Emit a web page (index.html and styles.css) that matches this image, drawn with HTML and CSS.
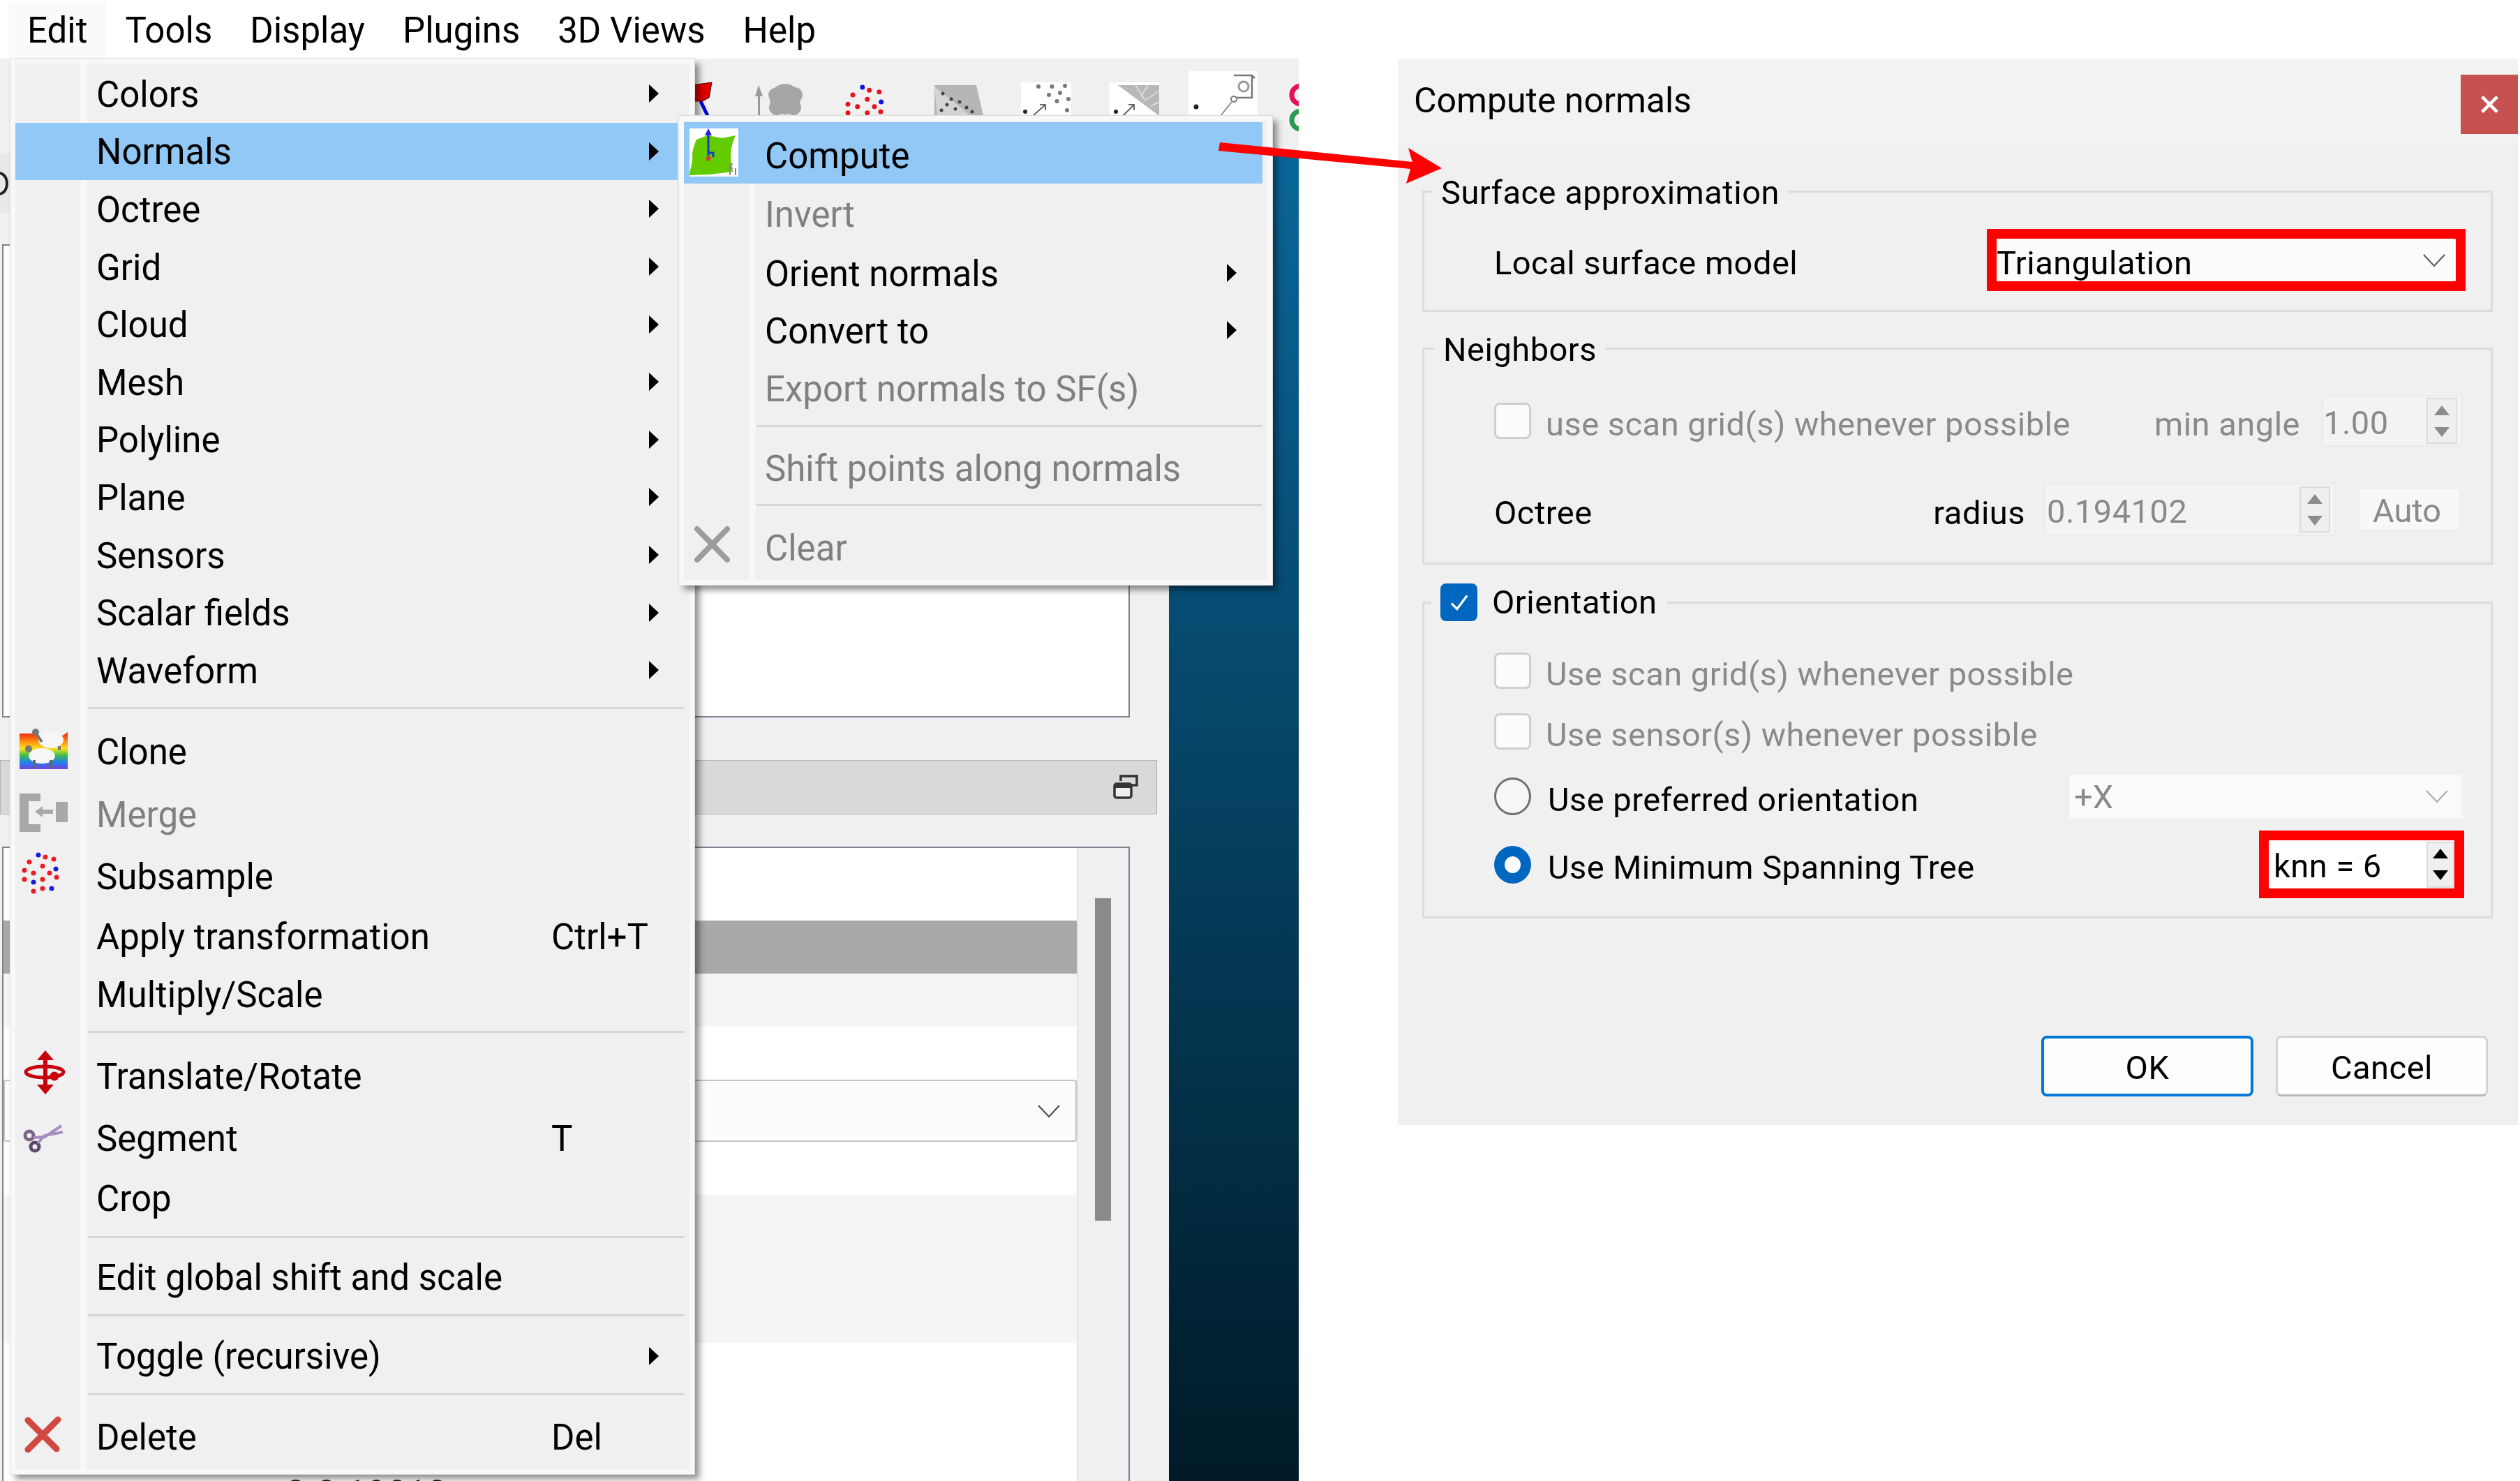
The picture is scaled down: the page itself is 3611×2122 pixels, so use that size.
FILE: index.html
```html
<!DOCTYPE html>
<html lang="en">
<head>
    <meta charset="UTF-8">
    <title>Compute normals</title>
    <link rel="stylesheet" href="styles.css">
</head>
<body>
    <div class="app">
        <div class="menubar">
            <span class="menubar-item active">Edit</span>
            <span class="menubar-item">Tools</span>
            <span class="menubar-item">Display</span>
            <span class="menubar-item">Plugins</span>
            <span class="menubar-item">3D Views</span>
            <span class="menubar-item">Help</span>
        </div>

        <div class="toolbar">
            <div class="grip"></div>
            <svg class="tool" viewBox="0 0 125 100">
                <path d="M60 45L72 70" stroke="#0000e0" stroke-width="5" fill="none"/>
                <path d="M48 22L76 18L72 40L62 45L50 45Z" fill="#e00000" stroke="#400" stroke-width="1"/>
            </svg>
            <svg class="tool" viewBox="0 0 125 100">
                <path d="M18 22L13 38H17V66H20V38H24Z" fill="#9a9a9a"/>
                <circle cx="56" cy="42" r="22" fill="#a6a6a6"/>
                <circle cx="42" cy="36" r="10" fill="#a6a6a6"/>
                <circle cx="70" cy="36" r="11" fill="#a6a6a6"/>
                <circle cx="44" cy="54" r="11" fill="#a6a6a6"/>
                <circle cx="68" cy="54" r="11" fill="#a6a6a6"/>
            </svg>
            <svg class="tool" viewBox="0 0 125 100">
                <g fill="#e8141c">
                    <circle cx="51.7" cy="29.3" r="3.5"/><circle cx="65.8" cy="31.7" r="3.5"/><circle cx="28" cy="36" r="3.5"/>
                    <circle cx="48.8" cy="42.3" r="3.5"/><circle cx="21" cy="49.3" r="3.5"/><circle cx="34.7" cy="52.7" r="3.5"/>
                    <circle cx="59" cy="52.7" r="3.5"/><circle cx="68" cy="60" r="3.5"/><circle cx="21" cy="61.7" r="3.5"/>
                    <circle cx="48.8" cy="61.7" r="3.5"/>
                </g>
                <g fill="#1414e0"><circle cx="41.8" cy="25" r="3.5"/><circle cx="68.7" cy="46" r="3.5"/></g>
            </svg>
            <svg class="tool" viewBox="0 0 125 100">
                <path d="M20 22H80L90 66H20Z" fill="#b6b6b6"/>
                <path d="M20 24L72 66H24Z" fill="#d4d4d4"/>
                <g fill="#444">
                    <circle cx="32" cy="34" r="2.5"/><circle cx="44" cy="42" r="2.5"/><circle cx="56" cy="46" r="2.5"/>
                    <circle cx="38" cy="50" r="2.5"/><circle cx="50" cy="56" r="2.5"/><circle cx="66" cy="54" r="2.5"/>
                    <circle cx="30" cy="58" r="2.5"/><circle cx="74" cy="60" r="2.5"/>
                </g>
            </svg>
            <svg class="tool" viewBox="0 0 125 100">
                <rect x="19" y="18" width="72" height="52" fill="#fff"/>
                <g fill="#777">
                    <circle cx="44" cy="24" r="3"/><circle cx="63.5" cy="24" r="3"/><circle cx="82" cy="23" r="3"/>
                    <circle cx="59" cy="36" r="3"/><circle cx="75" cy="33" r="3"/><circle cx="87" cy="42" r="3"/>
                    <circle cx="70.5" cy="45" r="3"/><circle cx="85" cy="58" r="3"/>
                </g>
                <circle cx="25" cy="60" r="3" fill="#222"/>
                <path d="M36 66L54 50M46 50H54V58" stroke="#666" stroke-width="2" fill="none"/>
            </svg>
            <svg class="tool" viewBox="0 0 125 100">
                <rect x="21" y="18" width="71" height="52" fill="#fff"/>
                <path d="M33 22H92V66Z" fill="#b8b8b8"/>
                <path d="M58 22L72 44M76 22L66 38M92 30L72 44M92 46L80 52" stroke="#e4e4e4" stroke-width="1.5" fill="none"/>
                <circle cx="30" cy="60" r="3" fill="#222"/>
                <path d="M40 66L56 50M48 50H56V58" stroke="#666" stroke-width="2" fill="none"/>
            </svg>
            <svg class="tool" viewBox="0 0 125 100">
                <rect x="9" y="2" width="99" height="68" fill="#fff"/>
                <path d="M74 8H100V40H78M100 8L104 12" stroke="#777" stroke-width="2.5" fill="none"/>
                <circle cx="88" cy="24" r="7" fill="none" stroke="#999" stroke-width="3"/>
                <circle cx="74" cy="42" r="4" fill="none" stroke="#777" stroke-width="2"/>
                <circle cx="20" cy="53" r="3.5" fill="#222"/>
                <path d="M55 66L71 46" stroke="#888" stroke-width="2"/>
            </svg>
            <svg class="tool" viewBox="0 0 125 100">
                <circle cx="45" cy="36" r="13" fill="none" stroke="#e0105c" stroke-width="7"/>
                <circle cx="45" cy="72" r="13" fill="none" stroke="#2a9a50" stroke-width="7"/>
            </svg>
        </div>

        <div class="workspace">
            <div class="side">
                <div class="side-tab">
                    <svg class="tab-glyph" viewBox="0 0 12 34"><path d="M0 2C8 4 10 12 10 17S8 30 0 32" fill="none" stroke="#222" stroke-width="4"/></svg>
                </div>
                <div class="panel-box upper"></div>
                <div class="panel-header">
                    <svg class="float-icon" viewBox="0 0 36 38">
                        <path d="M11 10V3H34V16H26" fill="none" stroke="#333" stroke-width="3.5"/>
                        <rect x="2" y="14" width="24" height="20" rx="3" fill="#eee" stroke="#333" stroke-width="3.5"/>
                        <rect x="2" y="14" width="24" height="6" fill="#333"/>
                    </svg>
                </div>
                <div class="panel-box lower">
                    <div class="table">
                        <div class="tr plain h-top"></div>
                        <div class="tr selected"></div>
                        <div class="tr alt h-one"></div>
                        <div class="tr plain h-combo">
                            <div class="table-combo">
                                <svg class="chevron-dark" viewBox="0 0 32 20"><path d="M1 2L16 18L31 2" fill="none" stroke="#444" stroke-width="2"/></svg>
                            </div>
                        </div>
                        <div class="tr alt h-two"></div>
                        <div class="tr plain h-rest"><span class="cut-number">2.3 19013</span></div>
                    </div>
                    <div class="scrollbar"><div class="thumb"></div></div>
                </div>
            </div>
            <div class="view"></div>
        </div>

        <!-- Edit menu -->
        <div class="menu main-menu">
            <div class="item"><span class="ico"></span><span>Colors</span><i class="arrow"></i></div>
            <div class="item hot"><span class="ico"></span><span>Normals</span><i class="arrow"></i></div>
            <div class="item"><span class="ico"></span><span>Octree</span><i class="arrow"></i></div>
            <div class="item"><span class="ico"></span><span>Grid</span><i class="arrow"></i></div>
            <div class="item"><span class="ico"></span><span>Cloud</span><i class="arrow"></i></div>
            <div class="item"><span class="ico"></span><span>Mesh</span><i class="arrow"></i></div>
            <div class="item"><span class="ico"></span><span>Polyline</span><i class="arrow"></i></div>
            <div class="item"><span class="ico"></span><span>Plane</span><i class="arrow"></i></div>
            <div class="item"><span class="ico"></span><span>Sensors</span><i class="arrow"></i></div>
            <div class="item"><span class="ico"></span><span>Scalar fields</span><i class="arrow"></i></div>
            <div class="item"><span class="ico"></span><span>Waveform</span><i class="arrow"></i></div>
            <div class="sep"></div>
            <div class="item">
                <span class="ico">
                    <svg viewBox="0 0 76 76">
                        <defs>
                            <linearGradient id="rainbow" x1="0" y1="0" x2="0" y2="1">
                                <stop offset="0" stop-color="#f01a10"/>
                                <stop offset=".28" stop-color="#ff9a10"/>
                                <stop offset=".45" stop-color="#f8e020"/>
                                <stop offset=".62" stop-color="#40c040"/>
                                <stop offset=".82" stop-color="#2080f0"/>
                                <stop offset="1" stop-color="#7a40d8"/>
                            </linearGradient>
                        </defs>
                        <path d="M0 12H20L28 16H60L69 10V63H0Z" fill="url(#rainbow)"/>
                        <ellipse cx="45" cy="21" rx="18" ry="12" fill="#f6f6f6"/>
                        <circle cx="23" cy="10" r="5" fill="#777"/>
                        <path d="M24 12L32 24M57 30V36" stroke="#777" stroke-width="4"/>
                        <ellipse cx="32" cy="44" rx="19" ry="11" fill="#f6f6f6"/>
                        <circle cx="13" cy="34" r="5" fill="#777"/>
                        <path d="M21 50V62M45 50V62" stroke="#666" stroke-width="4"/>
                    </svg>
                </span>
                <span>Clone</span>
            </div>
            <div class="item off">
                <span class="ico">
                    <svg viewBox="0 0 76 76">
                        <path d="M0 9H30V20H13V53H30V64H0Z" fill="#a8a8a8"/>
                        <rect x="52" y="21" width="17" height="29" fill="#a8a8a8"/>
                        <path d="M22 35L33 27V32H48V38H33V43Z" fill="#a8a8a8"/>
                    </svg>
                </span>
                <span>Merge</span>
            </div>
            <div class="item">
                <span class="ico">
                    <svg viewBox="0 0 76 76">
                        <g fill="#ea1c24">
                            <circle cx="37" cy="11" r="3.5"/><circle cx="49" cy="14" r="3.5"/><circle cx="14" cy="18" r="3.5"/>
                            <circle cx="33" cy="24" r="3.5"/><circle cx="7" cy="30" r="3.5"/><circle cx="20" cy="34" r="3.5"/>
                            <circle cx="43" cy="34" r="3.5"/><circle cx="7" cy="43" r="3.5"/><circle cx="33" cy="43" r="3.5"/>
                            <circle cx="53" cy="40" r="3.5"/><circle cx="20" cy="60" r="3.5"/><circle cx="33" cy="56" r="3.5"/>
                        </g>
                        <g fill="#1a1ae0">
                            <circle cx="27" cy="8" r="3.5"/><circle cx="52" cy="28" r="3.5"/><circle cx="20" cy="47" r="3.5"/><circle cx="46" cy="56" r="3.5"/>
                        </g>
                    </svg>
                </span>
                <span>Subsample</span>
            </div>
            <div class="item"><span class="ico"></span><span>Apply transformation</span><span class="key">Ctrl+T</span></div>
            <div class="item"><span class="ico"></span><span>Multiply/Scale</span></div>
            <div class="sep"></div>
            <div class="item">
                <span class="ico">
                    <svg viewBox="0 0 76 76">
                        <path d="M37 1L49 15H40V50H49L37 64L25 50H34V15H25Z" fill="#c8000c"/>
                        <ellipse cx="36" cy="32" rx="27" ry="8" fill="none" stroke="#c8000c" stroke-width="5"/>
                        <circle cx="50" cy="38" r="6.5" fill="#c8000c"/>
                    </svg>
                </span>
                <span>Translate/Rotate</span>
            </div>
            <div class="item">
                <span class="ico">
                    <svg viewBox="0 0 76 76">
                        <circle cx="14" cy="34" r="6" fill="none" stroke="#7c6488" stroke-width="5"/>
                        <circle cx="22" cy="50" r="6" fill="none" stroke="#5e4a6c" stroke-width="5"/>
                        <path d="M20 37L36 36L60 20M26 45L36 34L62 29" fill="none" stroke="#a88cc0" stroke-width="4"/>
                    </svg>
                </span>
                <span>Segment</span>
                <span class="key">T</span>
            </div>
            <div class="item"><span class="ico"></span><span>Crop</span></div>
            <div class="sep"></div>
            <div class="item"><span class="ico"></span><span>Edit global shift and scale</span></div>
            <div class="sep tight"></div>
            <div class="item"><span class="ico"></span><span>Toggle (recursive)</span><i class="arrow"></i></div>
            <div class="sep tight"></div>
            <div class="item">
                <span class="ico">
                    <svg viewBox="0 0 76 76">
                        <path d="M12 14L53 55M55 13L12 56" stroke="#d0483f" stroke-width="9" stroke-linecap="round"/>
                    </svg>
                </span>
                <span>Delete</span>
                <span class="key">Del</span>
            </div>
        </div>

        <!-- Normals submenu -->
        <div class="menu sub-menu">
            <div class="item hot first">
                <span class="ico">
                    <svg viewBox="0 0 76 76">
                        <rect x="2" y="3" width="70" height="69" fill="#fff"/>
                        <path d="M12 19L28 13L49 17L68 13C64 22 61 32 61 42C61 50 63 58 64 65L31 69L2 70C3 60 7 52 6 42C6 34 9 26 12 19Z" fill="#62cc00"/>
                        <path d="M29 12V42M29 38H36V44" fill="none" stroke="#1a3ac0" stroke-width="3"/>
                        <path d="M29 3L34 13H24Z" fill="#2020e0"/>
                        <circle cx="29" cy="46" r="3.5" fill="#d04030"/>
                        <path d="M60 70V58Q60 54 64 54M58 60H64M68 70V60" fill="none" stroke="#888" stroke-width="2"/>
                    </svg>
                </span>
                <span class="lbl">Compute</span>
            </div>
            <div class="item off"><span class="ico"></span><span>Invert</span></div>
            <div class="item"><span class="ico"></span><span>Orient normals</span><i class="arrow"></i></div>
            <div class="item"><span class="ico"></span><span>Convert to</span><i class="arrow"></i></div>
            <div class="item off"><span class="ico"></span><span>Export normals to SF(s)</span></div>
            <div class="sep"></div>
            <div class="item off"><span class="ico"></span><span>Shift points along normals</span></div>
            <div class="sep tight"></div>
            <div class="item off">
                <span class="ico">
                    <svg viewBox="0 0 76 76">
                        <path d="M13 12L56 56M56 12L13 56" stroke="#9c9c9c" stroke-width="8" stroke-linecap="round"/>
                    </svg>
                </span>
                <span>Clear</span>
            </div>
        </div>
    </div>

    <div class="dialog">
        <div class="dialog-title">
            <span>Compute normals</span>
            <div class="close">
                <svg viewBox="0 0 20 20"><path d="M2 2L18 18M18 2L2 18" stroke="#fff" stroke-width="3.5"/></svg>
            </div>
        </div>
        <div class="dialog-body">
            <fieldset class="group g-surface">
                <legend>Surface approximation</legend>
                <div class="line">
                    <span class="text indent">Local surface model</span>
                    <div class="combo marked push">
                        <span class="text">Triangulation</span>
                        <svg class="chevron" viewBox="0 0 32 20"><path d="M1 2L16 18L31 2" fill="none" stroke="#555" stroke-width="2"/></svg>
                    </div>
                </div>
            </fieldset>

            <fieldset class="group g-neighbors">
                <legend class="legend-n">Neighbors</legend>
                <div class="line l-first">
                    <span class="check"></span>
                    <span class="text dim">use scan grid(s) whenever possible</span>
                    <span class="text dim push">min angle</span>
                    <div class="spin s-angle">
                        <span class="value dim">1.00</span>
                        <div class="spin-btns"><b class="up"></b><b class="down"></b></div>
                    </div>
                </div>
                <div class="line l-second">
                    <span class="text indent">Octree</span>
                    <span class="text push">radius</span>
                    <div class="spin s-radius">
                        <span class="value dim">0.194102</span>
                        <div class="spin-btns"><b class="up"></b><b class="down"></b></div>
                    </div>
                    <div class="auto">Auto</div>
                </div>
            </fieldset>

            <fieldset class="group g-orient">
                <legend class="legend-o"><span class="check on"><svg viewBox="0 0 24 24"><path d="M5 13L10 18L19 6" fill="none" stroke="#fff" stroke-width="2"/></svg></span><span>Orientation</span></legend>
                <div class="line l-a">
                    <span class="check"></span>
                    <span class="text dim">Use scan grid(s) whenever possible</span>
                </div>
                <div class="line l-b">
                    <span class="check"></span>
                    <span class="text dim">Use sensor(s) whenever possible</span>
                </div>
                <div class="line l-c">
                    <span class="radio"></span>
                    <span class="text">Use preferred orientation</span>
                    <div class="combo plain-combo push">
                        <span class="dim">+X</span>
                        <svg class="chevron" viewBox="0 0 32 20"><path d="M1 2L16 18L31 2" fill="none" stroke="#aaa" stroke-width="2"/></svg>
                    </div>
                </div>
                <div class="line l-d">
                    <span class="radio on"></span>
                    <span class="text">Use Minimum Spanning Tree</span>
                    <div class="spin marked knn push">
                        <span class="value">knn = 6</span>
                        <div class="spin-btns strong"><b class="up"></b><b class="down"></b></div>
                    </div>
                </div>
            </fieldset>

            <div class="buttons">
                <button class="btn default">OK</button>
                <button class="btn">Cancel</button>
            </div>
        </div>
    </div>

    <!-- red annotation arrow -->
    <svg class="callout" viewBox="0 0 340 80">
        <path d="M2 8L278 36L276 30L272 16L320 45L269 67L274 50L275 46L0 20Z" fill="#ff0000"/>
    </svg>
</body>
</html>
```

FILE: styles.css
```css
* {
    box-sizing: border-box;
}

body {
    margin: 0;
    width: 3611px;
    height: 2122px;
    display: flex;
    align-items: flex-start;
    overflow: hidden;
    background-color: #fff;
    color: #000;
    font-family: Roboto, "Liberation Sans", sans-serif;
    font-size: 51px;
}

/* the source capture was scaled up, everything in it is a little soft */
.app,
.dialog {
    filter: blur(0.7px);
}

.app {
    position: relative;
    width: 1861px;
    height: 2122px;
    display: flex;
    flex-direction: column;
    flex: none;
}

/* menu bar */
.menubar {
    height: 84px;
    display: flex;
    align-items: center;
    padding-left: 12px;
}

.menubar-item {
    height: 80px;
    padding: 0 27px;
    line-height: 84px;
}

.menubar-item.active {
    background-color: #fafafa;
}

/* toolbar */
.toolbar {
    height: 136px;
    display: flex;
    align-items: flex-start;
    padding: 16px 0 0 8px;
    background-color: #f0f0f0;
    overflow: hidden;
}

.grip {
    width: 3px;
    height: 84px;
    margin: 10px 936px 0 0;
    background-color: #555;
}

.tool {
    width: 125px;
    height: 100px;
    flex: none;
}

/* docked panels */
.workspace {
    flex: 1;
    display: flex;
    min-height: 0;
}

.side {
    width: 1675px;
    display: flex;
    flex-direction: column;
    background-color: #f0f0f0;
}

.side-tab {
    height: 85px;
    margin-bottom: 45px;
    background-color: #e8e8e8;
    display: flex;
    align-items: center;
}

.tab-glyph {
    width: 12px;
    height: 34px;
}

.panel-box {
    margin: 0 56px 0 3px;
    border: 2px solid #7c8492;
    background-color: #fff;
}

.panel-box.upper {
    height: 678px;
}

.panel-header {
    height: 78px;
    margin: 61px 17px 46px 0;
    display: flex;
    align-items: center;
    justify-content: flex-end;
    padding-right: 26px;
    background-color: #d9d9d9;
    border: 1px solid #b4b4b4;
}

.float-icon {
    width: 36px;
    height: 38px;
}

.panel-box.lower {
    flex: 1;
    display: flex;
    min-height: 0;
    border-bottom: 0;
}

.table {
    flex: 1;
    display: flex;
    flex-direction: column;
    min-width: 0;
}

.tr.h-top {
    height: 104px;
}

.tr.selected {
    height: 76px;
    background-color: #a8a8a8;
}

.tr.alt {
    background-color: #f5f5f5;
}

.tr.h-one {
    height: 76px;
}

.tr.h-combo {
    height: 241px;
    padding-top: 76px;
}

.tr.h-two {
    height: 212px;
}

.tr.h-rest {
    flex: 1;
    padding: 182px 0 0 406px;
    overflow: hidden;
}

.table-combo {
    height: 89px;
    display: flex;
    align-items: center;
    justify-content: flex-end;
    padding-right: 22px;
    background-color: #fcfcfc;
    border: 2px solid #c4c4c4;
    border-radius: 3px;
}

.chevron-dark {
    width: 32px;
    height: 20px;
}

.cut-number {
    font-size: 46px;
    line-height: 46px;
    letter-spacing: 3px;
    color: #222;
}

.scrollbar {
    width: 74px;
    flex: none;
    padding: 72px 25px 0 24px;
    background-color: #f0f0f0;
    border-left: 2px solid #e4e4e4;
}

.thumb {
    height: 462px;
    background-color: #8a8a8a;
}

.view {
    flex: 1;
    background: linear-gradient(180deg, #0a6699 0%, #001a27 100%);
}

/* popup menus */
.menu {
    position: absolute;
    display: grid;
    align-items: center;
    border: 7px solid #f8f8f8;
    outline: 1px solid #dedede;
    background: linear-gradient(90deg, #f0f0f0 93px, #f7f7f7 93px 102px, #f0f0f0 102px);
    box-shadow: 7px 7px 9px rgba(0, 0, 0, 0.45);
}

.main-menu {
    left: 15px;
    top: 84px;
    width: 980px;
    height: 2028px;
    padding-top: 2px;
    grid-template-rows:
        repeat(11, 82.6px) 30.4px
        90px 89px 89px 84px 82px 30px
        92px 86px 86px 25px
        90px 23px
        90px 26px
        90px;
    align-content: start;
}

.sub-menu {
    left: 973px;
    top: 166px;
    width: 850px;
    height: 672px;
    padding-top: 2px;
    grid-template-rows: 88px 87px 82px 82px 84px 28px 88px 26px 88px;
    align-content: start;
}

.item {
    height: 100%;
    display: flex;
    align-items: center;
    padding-right: 27px;
}

.item > span:not(.ico) {
    padding-top: 2px;
}

.main-menu .item {
    margin-right: 17px;
}

.sub-menu .item {
    margin-right: 7px;
    padding-right: 37px;
}

.item.hot {
    background-color: #91c8f6;
}

.item.off {
    color: #808080;
}

.sub-menu .first .lbl {
    padding-top: 8px;
}

.ico {
    width: 116px;
    height: 76px;
    flex: none;
    padding-left: 6px;
}

.ico svg {
    display: block;
    width: 76px;
    height: 76px;
}

.key {
    width: 154px;
    margin-left: auto;
}

.arrow {
    margin-left: auto;
    width: 0;
    height: 0;
    border-left: 14px solid #000;
    border-top: 13px solid transparent;
    border-bottom: 13px solid transparent;
}

.sep {
    align-self: start;
    height: 3px;
    margin: 11px 8px 0 104px;
    background-color: #d6d6d6;
}

.sep.tight {
    margin-top: 8px;
}

/* dialog */
.dialog {
    width: 1605px;
    height: 1528px;
    margin: 84px 0 0 142px;
    flex: none;
    display: flex;
    flex-direction: column;
    background-color: #f0f0f0;
    font-size: 47px;
}

.dialog-title {
    height: 121px;
    display: flex;
    justify-content: space-between;
    padding-left: 23px;
    line-height: 120px;
    font-size: 50px;
    background-color: #f2f2f2;
}

.close {
    width: 82px;
    height: 85px;
    margin-top: 23px;
    display: flex;
    align-items: center;
    justify-content: center;
    background-color: #c75050;
}

.close svg {
    width: 27px;
    height: 27px;
}

.dialog-body {
    flex: 1;
    padding: 44px 36px 0 35px;
}

.group {
    margin: 0 0 27px;
    padding: 0 34px 0 0;
    border: 3px solid #dcdcdc;
    min-width: 0;
}

.group legend {
    height: 50px;
    line-height: 54px;
    margin-left: 12px;
    padding: 0 12px;
    letter-spacing: 0.5px;
}

.group legend.legend-n {
    margin-left: 15px;
}

.group legend.legend-o {
    height: 54px;
    display: flex;
    align-items: center;
    gap: 21px;
    margin-left: 9px;
    padding: 0 14px;
}

.g-surface {
    height: 198px;
}

.g-neighbors {
    height: 335px;
}

.g-orient {
    height: 480px;
}

.line {
    display: flex;
    align-items: center;
    padding-left: 100px;
}

.g-surface .line {
    height: 89px;
    margin-top: 29px;
}

.l-first {
    height: 74px;
    margin-top: 42px;
}

.l-second {
    height: 76px;
    margin-top: 52px;
}

.l-a {
    height: 52px;
    margin-top: 45px;
}

.l-b {
    height: 54px;
    margin-top: 34px;
}

.l-c {
    height: 64px;
    margin-top: 34px;
}

.l-d {
    height: 97px;
    margin-top: 17px;
}

.text,
.value {
    letter-spacing: 0.5px;
    white-space: nowrap;
}

.text {
    padding-top: 8px;
}

.value {
    padding-top: 4px;
}

.dim {
    color: #8a8a8a;
}

.push {
    margin-left: auto;
}

.check {
    width: 53px;
    height: 52px;
    flex: none;
    margin-right: 21px;
    background-color: #fbfbfb;
    border: 3px solid #cfcfcf;
    border-radius: 8px;
}

.check.on {
    margin-right: 0;
    height: 54px;
    background-color: #0067c0;
    border-color: #0067c0;
    display: flex;
    align-items: center;
    justify-content: center;
}

.check.on svg {
    width: 38px;
    height: 38px;
}

.radio {
    width: 53px;
    height: 54px;
    flex: none;
    margin-right: 24px;
    border: 3px solid #6e6e6e;
    border-radius: 50%;
    background-color: #f6f6f6;
}

.radio.on {
    border: 15px solid #0067c0;
    background-color: #fff;
}

.combo {
    display: flex;
    align-items: center;
    justify-content: space-between;
    background-color: #fbfbfb;
}

.combo.marked {
    width: 686px;
    height: 89px;
    margin-right: 2px;
    padding: 0 15px 0 0;
    border: 14px solid #ff0000;
}

.plain-combo {
    width: 565px;
    height: 64px;
    margin-right: 6px;
    padding: 0 19px 0 6px;
    border: 2px solid #f4f4f4;
}

.chevron {
    width: 32px;
    height: 20px;
}

.spin {
    display: flex;
    align-items: center;
    justify-content: space-between;
    background-color: #f3f3f3;
    border: 2px solid #ebebeb;
}

.s-angle {
    width: 202px;
    height: 74px;
    margin-left: 31px;
    margin-right: 6px;
    padding: 0 6px 0 0;
}

.s-radius {
    width: 419px;
    height: 76px;
    margin-left: 26px;
    padding: 0 6px 0 3px;
}

.spin.knn {
    width: 294px;
    height: 97px;
    margin-right: 4px;
    padding: 0 0 0 7px;
    background-color: #fff;
    border: 14px solid #ff0000;
}

.spin-btns {
    width: 44px;
    display: flex;
    flex-direction: column;
    flex: none;
    border: 2px solid #dcdcdc;
    background-color: #efefef;
}

.spin-btns b {
    height: 31px;
    display: flex;
    align-items: center;
    justify-content: center;
}

.spin-btns b::before {
    content: "";
    width: 0;
    height: 0;
    border-left: 11px solid transparent;
    border-right: 11px solid transparent;
}

.spin-btns .up::before {
    border-bottom: 14px solid #8c8c8c;
}

.spin-btns .down::before {
    border-top: 14px solid #8c8c8c;
}

.spin-btns.strong {
    width: 40px;
}

.spin-btns.strong .up::before {
    border-bottom-color: #000;
}

.spin-btns.strong .down::before {
    border-top-color: #000;
}

.auto {
    width: 146px;
    height: 62px;
    margin: 0 9px 0 33px;
    padding-right: 8px;
    line-height: 62px;
    text-align: center;
    color: #8a8a8a;
    background-color: #f8f8f8;
    border: 2px solid #eee;
    border-radius: 6px;
}

.buttons {
    display: flex;
    justify-content: flex-end;
    gap: 32px;
    margin-top: 168px;
    padding-right: 7px;
}

.btn {
    width: 304px;
    height: 87px;
    padding: 3px 0 0;
    font: inherit;
    letter-spacing: 0.5px;
    color: #000;
    background-color: #fdfdfd;
    border: 3px solid #d4d4d4;
    border-bottom-color: #b8b8b8;
    border-radius: 8px;
}

.btn.default {
    border: 4px solid #0078d4;
}

.callout {
    position: absolute;
    left: 1746px;
    top: 196px;
    width: 340px;
    height: 80px;
}
```
